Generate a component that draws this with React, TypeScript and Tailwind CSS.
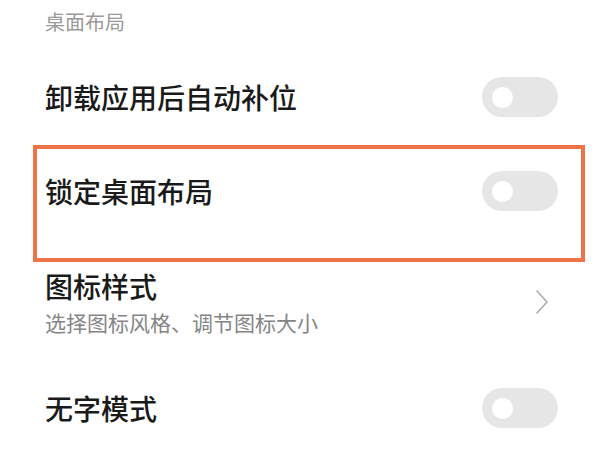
import React from "react";

const font = { fontFamily: '"Noto Sans CJK SC", "Noto Sans", sans-serif' };

function Toggle() {
  return (
    <div className="w-[76px] h-[40px] rounded-full bg-[#e6e6e6] flex items-center pl-[10px] shrink-0">
      <div className="w-[21px] h-[21px] rounded-full bg-white" />
    </div>
  );
}

function Chevron() {
  return (
    <svg width="14" height="26" viewBox="0 0 14 26" className="shrink-0 mr-[9px]">
      <polyline points="2,2 12,13 2,24" fill="none" stroke="#ababab" strokeWidth="1.6" strokeLinecap="round" strokeLinejoin="round" />
    </svg>
  );
}

export default function App() {
  return (
    <div className="relative w-[600px] h-[450px] bg-white overflow-hidden" style={font}>
      <div className="h-[50px] pl-[45px] pt-[8px] text-[20px] leading-[28px] text-[#9a9a9a]">桌面布局</div>

      <div className="h-[94px] flex items-center justify-between pl-[45px] pr-[42px]">
        <span className="text-[28px] leading-[36px] font-medium text-[#1a1a1a]">卸载应用后自动补位</span>
        <Toggle />
      </div>

      <div className="h-[94px] flex items-center justify-between pl-[45px] pr-[42px]">
        <span className="text-[28px] leading-[36px] font-medium text-[#1a1a1a]">锁定桌面布局</span>
        <Toggle />
      </div>

      <div className="h-[128px] flex items-center justify-between pl-[45px] pr-[42px]">
        <div className="flex flex-col gap-[4px]">
          <span className="text-[28px] leading-[36px] font-medium text-[#1a1a1a]">图标样式</span>
          <span className="text-[21px] leading-[28px] text-[#858585]">选择图标风格、调节图标大小</span>
        </div>
        <Chevron />
      </div>

      <div className="h-[84px] flex items-center justify-between pl-[45px] pr-[42px]">
        <span className="text-[28px] leading-[36px] font-medium text-[#1a1a1a]">无字模式</span>
        <Toggle />
      </div>

      <div className="absolute left-[33px] top-[145px] w-[552px] h-[117px] border-[4px] border-[#ee7447] pointer-events-none" />
    </div>
  );
}
